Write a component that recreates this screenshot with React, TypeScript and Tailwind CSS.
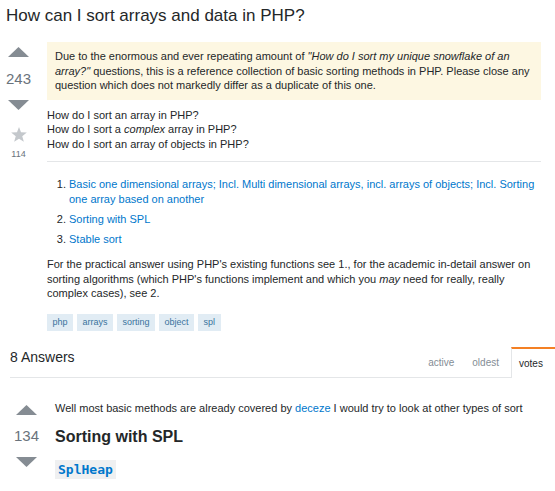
import React from 'react'

function UpArrow({ className = '' }: { className?: string }) {
  return (
    <svg width="21" height="10" viewBox="0 0 21 10" className={className}>
      <path d="M0 10 L10.5 0 L21 10 Z" fill="#858c93" />
    </svg>
  )
}

function DownArrow({ className = '' }: { className?: string }) {
  return (
    <svg width="21" height="10" viewBox="0 0 21 10" className={className}>
      <path d="M0 0 L21 0 L10.5 10 Z" fill="#858c93" />
    </svg>
  )
}

function Star() {
  return (
    <svg width="16" height="15" viewBox="0 0 24 23" className="mt-[17px]">
      <path
        d="M12 0 L15.1 8.1 L24 8.6 L17 14.1 L19.4 22.8 L12 17.9 L4.6 22.8 L7 14.1 L0 8.6 L8.9 8.1 Z"
        fill="#c4c8cc"
      />
    </svg>
  )
}

const tags = ['php', 'arrays', 'sorting', 'object', 'spl']

export default function App() {
  return (
    <div
      className="w-[555px] h-[491px] overflow-hidden bg-white text-[#242729]"
      style={{ fontFamily: '"Liberation Sans", Arial, sans-serif' }}
    >
      <h1 className="pl-[6px] pt-[5px] text-[17px] leading-[22px] font-normal">
        How can I sort arrays and data in PHP?
      </h1>

      {/* question */}
      <div className="flex mt-[15px]">
        <div className="w-[37px] mr-[10px] flex flex-col items-center pt-[5px]">
          <UpArrow />
          <div className="mt-[13px] text-[15px] leading-[18px] text-[#6a737c]">243</div>
          <DownArrow className="mt-[12px]" />
          <Star />
          <div className="mt-[7px] text-[9px] leading-[11px] text-[#6a737c]">114</div>
        </div>

        <div className="w-[494px] text-[11px] leading-[14.5px]">
          <div className="bg-[#fdf7e2] px-[8px] py-[7px]">
            Due to the enormous and ever repeating amount of{' '}
            <em>"How do I sort my unique snowflake of an array?"</em> questions, this is a reference
            collection of basic sorting methods in PHP. Please close any question which does not
            markedly differ as a duplicate of this one.
          </div>

          <div className="mt-[8px]">
            <div>How do I sort an array in PHP?</div>
            <div>
              How do I sort a <em>complex</em> array in PHP?
            </div>
            <div>How do I sort an array of objects in PHP?</div>
          </div>

          <div className="mt-[10px] border-t border-[#e4e6e8]" />

          <ol className="mt-[15px] pl-[22px] list-decimal">
            <li className="mb-[5.5px] text-[#0077cc] marker:text-[#242729]">
              Basic one dimensional arrays; Incl. Multi dimensional arrays, incl. arrays of objects;
              Incl. Sorting one array based on another
            </li>
            <li className="mb-[5.5px] text-[#0077cc] marker:text-[#242729]">Sorting with SPL</li>
            <li className="text-[#0077cc] marker:text-[#242729]">Stable sort</li>
          </ol>

          <p className="mt-[11px]">
            For the practical answer using PHP's existing functions see 1., for the academic
            in-detail answer on sorting algorithms (which PHP's functions implement and which you{' '}
            <em>may</em> need for really, really complex cases), see 2.
          </p>

          <div className="mt-[13px] flex gap-[4px]">
            {tags.map((t) => (
              <span
                key={t}
                className="bg-[#e1ecf4] text-[#39739d] text-[9px] leading-[17px] px-[5.5px]"
              >
                {t}
              </span>
            ))}
          </div>
        </div>
      </div>

      {/* answers header */}
      <div className="flex mt-[16px] ml-[10px] h-[31px]">
        <div className="flex-1 flex border-b border-[#e4e6e8]">
          <div className="text-[14px] leading-[16px] mt-[2px]">8 Answers</div>
          <div className="ml-auto flex items-end pb-[8px] text-[10px] leading-[12px] text-[#848d95]">
            <span className="mr-[18px]">active</span>
            <span className="mr-[12px]">oldest</span>
          </div>
        </div>
        <div className="w-[44px] border-t-2 border-l border-[#f48024] border-l-[#e4e6e8] flex items-end pb-[8px] pl-[7px] text-[10px] leading-[12px]">
          votes
        </div>
      </div>

      {/* answer */}
      <div className="flex mt-[23px]">
        <div className="w-[52px] mr-[3px] flex flex-col items-center pl-[1px] pt-[4px]">
          <UpArrow />
          <div className="mt-[12px] text-[15px] leading-[18px] text-[#6a737c]">134</div>
          <DownArrow className="mt-[12px]" />
        </div>
        <div className="flex-1 text-[11px] leading-[14.5px]">
          <p>
            Well most basic methods are already covered by{' '}
            <span className="text-[#0077cc]">deceze</span> I would try to look at other types of
            sort
          </p>
          <h2 className="mt-[11.5px] text-[16px] leading-[20px] font-bold">Sorting with SPL</h2>
          <div className="mt-[13px]">
            <code
              className="inline-block bg-[#eff0f1] px-[3px] py-[2px] text-[13px] leading-[15px] font-bold text-[#0077cc]"
              style={{ fontFamily: '"DejaVu Sans Mono", monospace' }}
            >
              SplHeap
            </code>
          </div>
        </div>
      </div>
    </div>
  )
}
